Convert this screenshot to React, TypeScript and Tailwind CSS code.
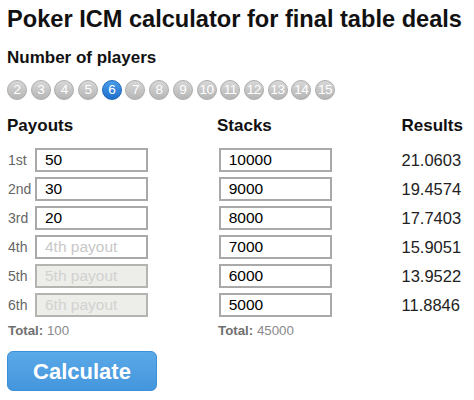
import { useState } from 'react';

const payouts = ['50', '30', '20', '', '', ''];
const stacks = ['10000', '9000', '8000', '7000', '6000', '5000'];
const results = ['21.0603', '19.4574', '17.7403', '15.9051', '13.9522', '11.8846'];
const places = ['1st', '2nd', '3rd', '4th', '5th', '6th'];

export default function App() {
  const [players, setPlayers] = useState(6);

  return (
    <div className="min-h-[400px] w-[474px] bg-white pl-[7px] font-['Liberation_Sans',Arial,sans-serif] text-black">
      <h1 className="pt-[4.5px] text-[23.6px] font-bold leading-[28px] text-[#111]">
        Poker ICM calculator for final table deals
      </h1>

      <h2 className="mt-[15.6px] text-[17px] font-bold leading-[20px] text-[#111]">Number of players</h2>

      <div className="mt-[12px] flex gap-[3.7px]">
        {Array.from({ length: 14 }, (_, i) => i + 2).map((n) => (
          <button
            key={n}
            onClick={() => setPlayers(n)}
            className={
              n === players
                ? 'flex h-[20px] w-[20px] items-center justify-center rounded-full border border-[#1f66b8] bg-gradient-to-b from-[#4a9de8] to-[#1f6fcc] text-[13.5px] leading-none tracking-[-0.5px] text-white'
                : 'flex h-[20px] w-[20px] items-center justify-center rounded-full border border-[#acacac] bg-gradient-to-b from-[#d8d8d8] to-[#b5b5b5] text-[13.5px] leading-none tracking-[-0.5px] text-white'
            }
          >
            {n}
          </button>
        ))}
      </div>

      <div className="mt-[15.8px] grid grid-cols-[210px_184.5px_1fr] text-[17px] font-bold leading-[20px] text-[#111]">
        <div>Payouts</div>
        <div>Stacks</div>
        <div>Results</div>
      </div>

      <div className="mt-[12.2px] flex flex-col gap-[5px]">
        {places.map((p, i) => {
          const disabled = i >= 4;
          return (
            <div key={p} className="grid h-[24px] grid-cols-[210px_184.5px_1fr] items-center">
              <div className="flex items-center">
                <span className="w-[28px] pl-[1px] text-[14px] text-[#666]">{p}</span>
                <input
                  defaultValue={payouts[i]}
                  placeholder={`${p} payout`}
                  disabled={disabled}
                  className={
                    disabled
                      ? 'h-[24px] w-[113px] border-2 border-[#b4b4b0] bg-[#ededea] pl-[8px] text-[15.5px] text-black outline-none placeholder:text-[#d2d2d0]'
                      : 'h-[24px] w-[113px] border-2 border-[#a9a9a9] bg-white pl-[8px] text-[15.5px] text-black outline-none placeholder:text-[#c8c8c8]'
                  }
                />
              </div>
              <div className="pl-[1.7px]">
                <input
                  defaultValue={stacks[i]}
                  className="h-[24px] w-[113px] border-2 border-[#a9a9a9] bg-white pl-[8px] text-[15.5px] text-black outline-none"
                />
              </div>
              <div className="text-[16.5px] text-[#222]">{results[i]}</div>
            </div>
          );
        })}
      </div>

      <div className="mt-[5.5px] grid grid-cols-[210px_184.5px_1fr] text-[13.3px] leading-[16px]">
        <div className="pl-[1px] text-[#8a8a8a]">
          <b className="text-[#707070]">Total:</b> 100
        </div>
        <div className="pl-[1px] text-[#8a8a8a]">
          <b className="text-[#707070]">Total:</b> 45000
        </div>
        <div />
      </div>

      <button className="mt-[12.5px] h-[40px] w-[150px] rounded-[6px] border border-[#3d8fd6] bg-gradient-to-b from-[#5aa9e8] to-[#4496dc] text-[22px] font-bold text-white">
        Calculate
      </button>
    </div>
  );
}
